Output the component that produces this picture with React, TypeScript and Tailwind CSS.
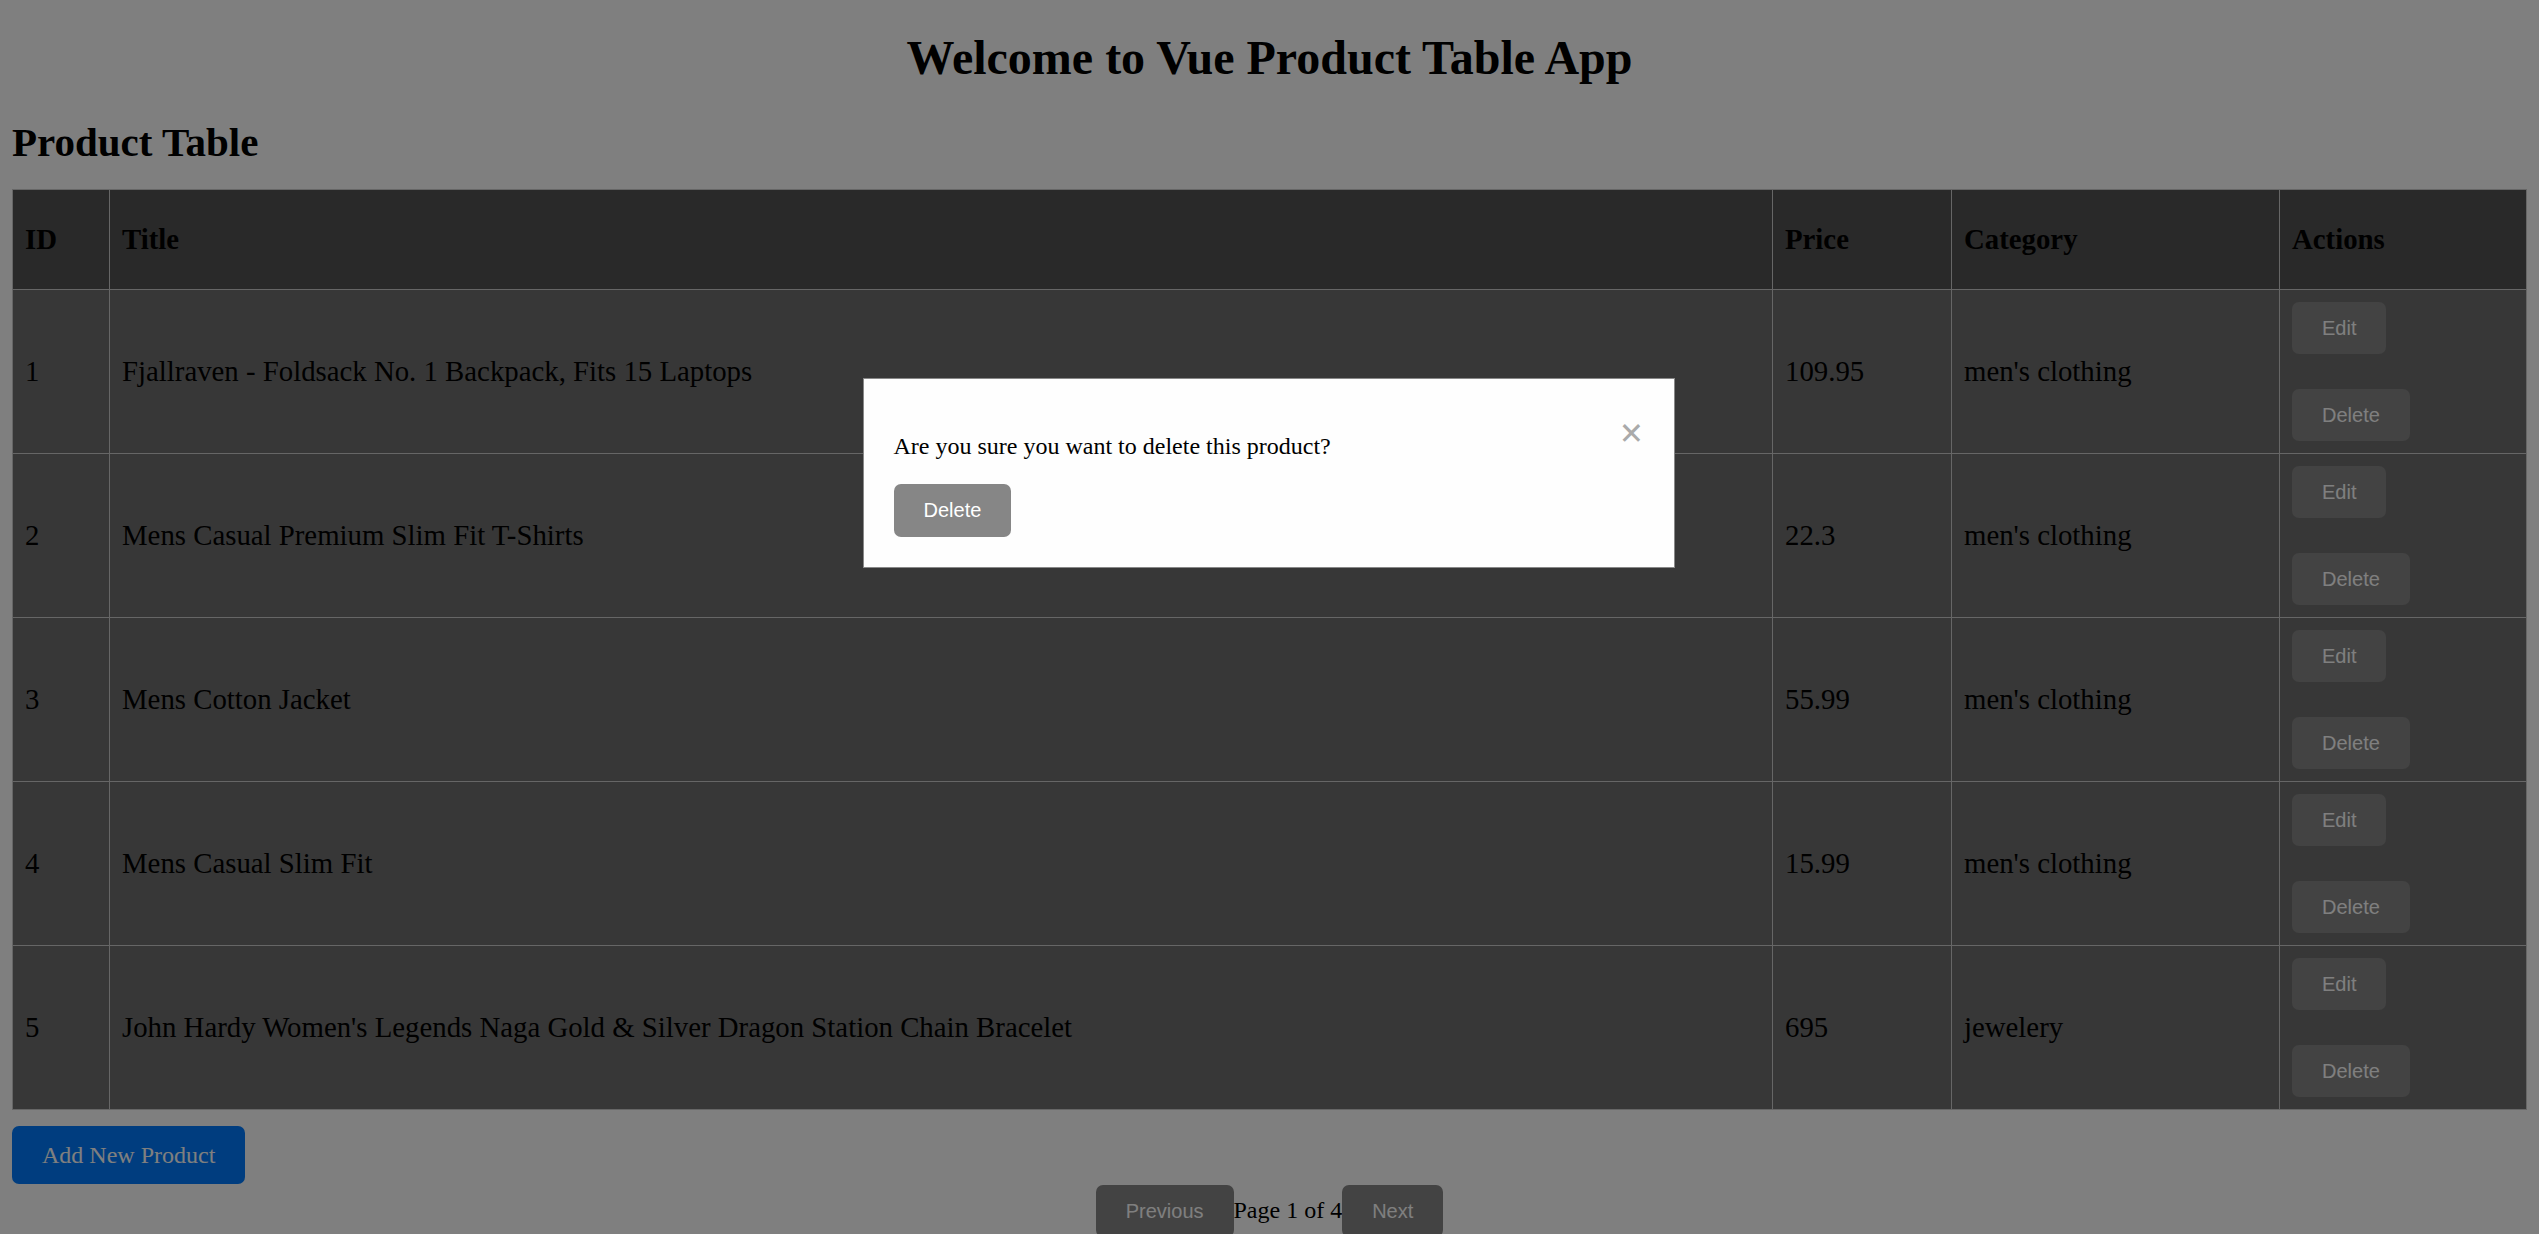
import React from 'react';

interface Product {
  id: number;
  title: string;
  price: string;
  category: string;
}

const PRODUCTS: Product[] = [
  { id: 1, title: 'Fjallraven - Foldsack No. 1 Backpack, Fits 15 Laptops', price: '109.95', category: "men's clothing" },
  { id: 2, title: 'Mens Casual Premium Slim Fit T-Shirts', price: '22.3', category: "men's clothing" },
  { id: 3, title: 'Mens Cotton Jacket', price: '55.99', category: "men's clothing" },
  { id: 4, title: 'Mens Casual Slim Fit', price: '15.99', category: "men's clothing" },
  { id: 5, title: "John Hardy Women's Legends Naga Gold & Silver Dragon Station Chain Bracelet", price: '695', category: 'jewelery' },
];

const btn =
  "rounded-[7px] bg-[#868686] px-[30px] py-[15px] font-['Liberation_Sans',Arial,sans-serif] text-[20px] leading-[22px] text-white";

const cell = 'border border-[#cccccc] px-[12px] text-left align-middle';

export default function App() {
  return (
    <div className="min-h-screen bg-white px-[12px] pt-[31px] pb-[40px] font-['Liberation_Serif','Times_New_Roman',serif] text-black">
      <h1 className="text-center text-[48px] font-bold leading-[54px]">Welcome to Vue Product Table App</h1>
      <h2 className="mt-[34px] text-[41px] font-bold leading-[46px]">Product Table</h2>

      {/* Table */}
      <table className="mt-[24px] w-full table-fixed border-collapse border border-[#cccccc] text-[28.8px] leading-[33px]">
        <thead>
          <tr className="h-[100px] bg-[#525252]">
            <th className={`${cell} w-[97px] font-bold`}>ID</th>
            <th className={`${cell} font-bold`}>Title</th>
            <th className={`${cell} w-[179px] font-bold`}>Price</th>
            <th className={`${cell} w-[328px] font-bold`}>Category</th>
            <th className={`${cell} w-[247px] font-bold`}>Actions</th>
          </tr>
        </thead>
        <tbody>
          {PRODUCTS.map((p) => (
            <tr key={p.id} className="bg-[#6f6f6f]">
              <td className={cell}>{p.id}</td>
              <td className={cell}>{p.title}</td>
              <td className={cell}>{p.price}</td>
              <td className={cell}>{p.category}</td>
              <td className={`${cell} py-[12px]`}>
                <div className="flex flex-col items-start gap-[35px]">
                  <button className={btn}>Edit</button>
                  <button className={btn}>Delete</button>
                </div>
              </td>
            </tr>
          ))}
        </tbody>
      </table>

      <div className="mt-[16px] flex">
        <button className="rounded-[7px] bg-[#007bff] px-[30px] py-[15px] text-[24px] leading-[28px] text-white">
          Add New Product
        </button>
      </div>

      {/* Pagination */}
      <div className="mt-[1px] flex items-baseline justify-center">
        <button className={btn}>Previous</button>
        <span className="text-[24px] leading-[28px]">Page 1 of 4</span>
        <button className={btn}>Next</button>
      </div>

      {/* Delete confirm modal */}
      <div className="fixed inset-0 bg-black/50 pt-[378px]">
        <div className="mx-auto w-[812px] -translate-x-[1px] border border-[#888888] bg-[#fefefe] p-[30px]">
          <span className="float-right cursor-pointer text-[42px] font-bold leading-[48px] text-[#aaaaaa]">×</span>
          <p className="my-[24px] text-[24px] leading-[27px]">Are you sure you want to delete this product?</p>
          <button className={`${btn} leading-[23px]`}>Delete</button>
        </div>
      </div>
    </div>
  );
}
